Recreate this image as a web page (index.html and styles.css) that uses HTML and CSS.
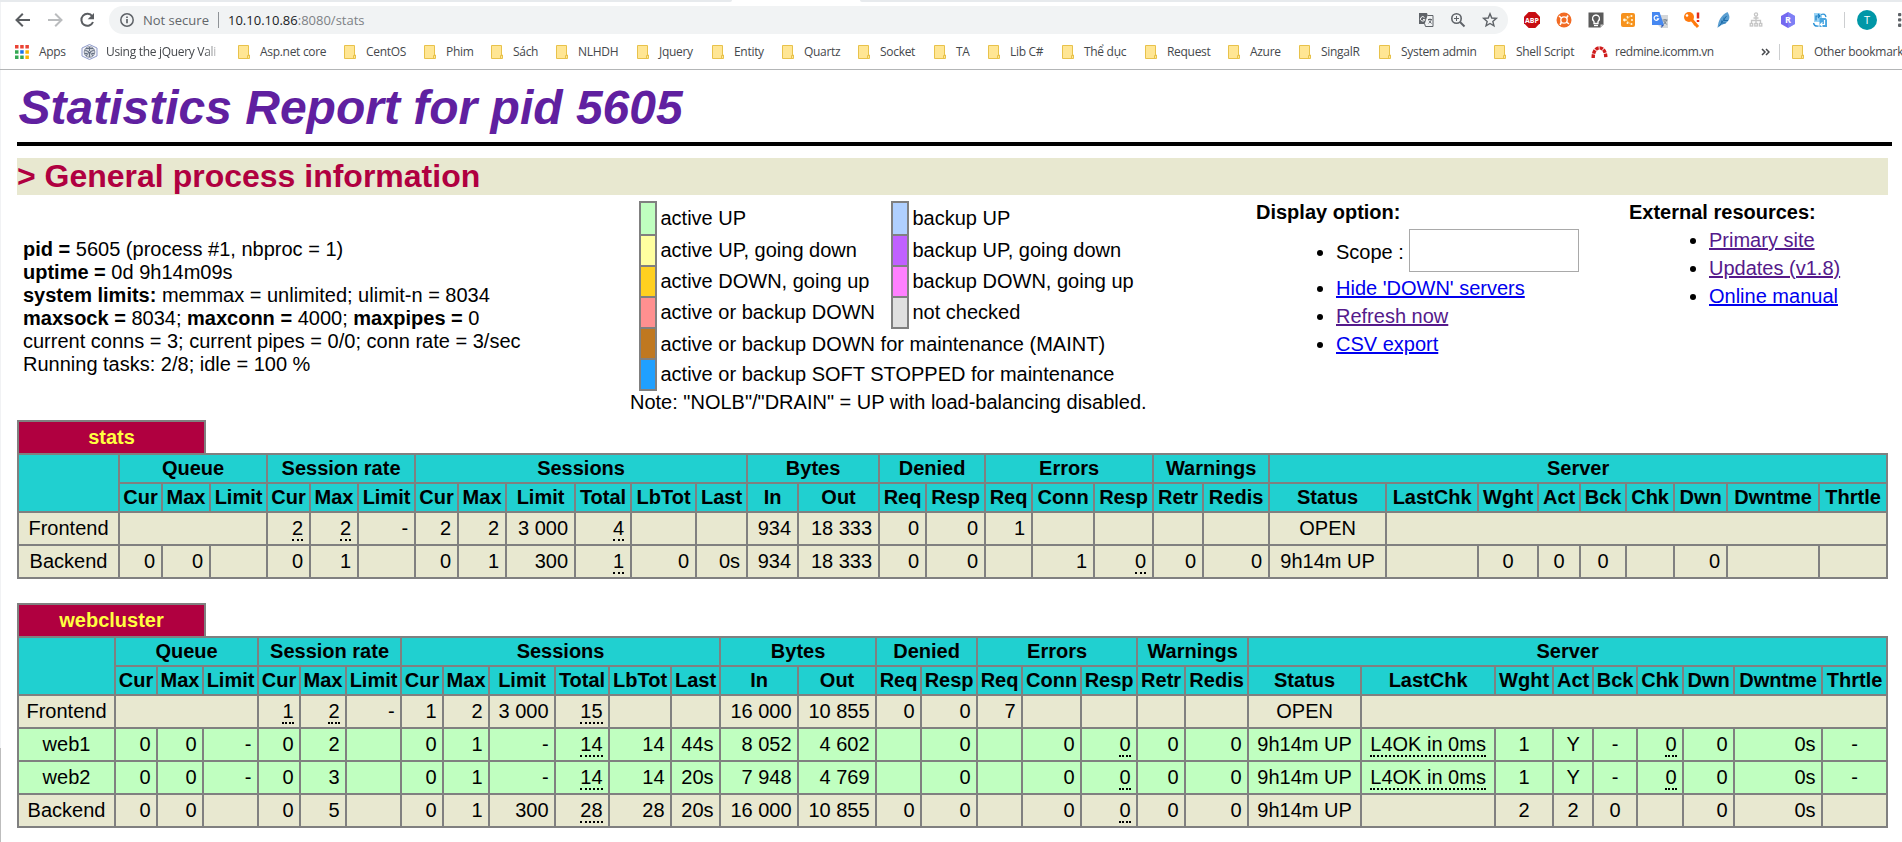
FILE: index.html
```html
<!DOCTYPE html>
<html lang="en">
<head>
<meta charset="utf-8">
<title>Statistics Report for HAProxy</title>
<link rel="stylesheet" href="styles.css">
</head>
<body>
<svg class="defs" width="0" height="0">
  <symbol id="folder" viewBox="0 0 12 14"><path d="M.5 .5h10v9.5h1v3.5h-11z" fill="#ffe694" stroke="#e8c24b"/><path d="M9.5 13.500v-3h1.500" fill="none" stroke="#e8c24b"/></symbol>
</svg>

<header class="browser">
  <div class="tabstrip"><i class="tabs-left"></i><i class="tabs-right"></i></div>
  <div class="toolbar">
    <div class="nav">
      <svg width="32" height="28" viewBox="0 0 32 28"><path d="M23 14H10M15.800 7.700L9.500 14l6.300 6.300" fill="none" stroke="#5a5d61" stroke-width="2"/></svg>
      <svg width="32" height="28" viewBox="0 0 32 28"><path d="M9 14h13M16.200 7.700l6.300 6.300-6.300 6.300" fill="none" stroke="#babcbe" stroke-width="2"/></svg>
      <svg width="32" height="28" viewBox="0 0 32 28"><path d="M21.300 10.300A6 6 0 1 0 22 16" fill="none" stroke="#5a5d61" stroke-width="2"/><path d="M23 7v6.300h-6.300z" fill="#5a5d61"/></svg>
    </div>
    <div class="omnibox">
      <svg width="16" height="16" viewBox="0 0 16 16"><circle cx="8" cy="8" r="6.200" fill="none" stroke="#5f6368" stroke-width="1.500"/><path d="M8 7v4.200M8 4.500v1.600" stroke="#5f6368" stroke-width="1.700"/></svg>
      <span class="notsecure">Not secure</span>
      <span class="urlsep"></span>
      <span class="url">10.10.10.86<span class="path">:8080/stats</span></span>
      <span class="omni-icons">
        <svg width="32" height="16" viewBox="0 0 32 16"><path d="M9 1h8l3.500 11H9z" fill="#5f6368"/><path d="M17.500 3.500H23v11h-7.500l-.8-2.500" fill="#f1f3f4" stroke="#5f6368"/><path d="M14.500 5.600a2.200 2.200 0 1 0 .3 2H13" fill="none" stroke="#fff"/><path d="M18 7.500h4M20 6.500v1M21.300 7.500c-.4 1.800-1.600 3-2.700 3.800M18.800 8.500l2.700 3" fill="none" stroke="#5f6368"/></svg>
        <svg width="32" height="16" viewBox="0 0 32 16"><circle cx="14.500" cy="6.500" r="4.700" fill="none" stroke="#5f6368" stroke-width="1.600"/><path d="M18 10l4.500 4.500" stroke="#5f6368" stroke-width="2"/><path d="M12 6.500h5M14.500 4v5" stroke="#5f6368"/></svg>
        <svg width="32" height="16" viewBox="0 0 32 16"><path d="M16 1.800l1.750 4.250 4.600.35-3.500 3 1.100 4.450L16 11.450l-3.950 2.400 1.100-4.450-3.500-3 4.600-.35z" fill="none" stroke="#5f6368" stroke-width="1.400"/></svg>
      </span>
    </div>
    <div class="extensions">
      <svg width="32" height="18" viewBox="0 0 32 18"><path d="M12.700 1h6.600L24 5.700v6.600L19.300 17h-6.600L8 12.300V5.700z" fill="#c70d12"/><text x="16" y="12" class="abp">ABP</text></svg>
      <svg width="32" height="18" viewBox="0 0 32 18"><circle cx="16" cy="9" r="7.500" fill="#f26b24"/><circle cx="16" cy="9" r="3.200" fill="none" stroke="#fff" stroke-width="1.300"/><path d="M11 5l2.500 2M18.500 7L20 4.500M18.500 11l2.500 2M13.500 11L12 13.800" stroke="#fff" stroke-width="1.600"/></svg>
      <svg width="32" height="18" viewBox="0 0 32 18"><path d="M8.500 1.500h15v12l-3 3h-12z" fill="#5b5b5b"/><path d="M23.500 13.500h-3v3z" fill="#ccc"/><path d="M14 10.500c-3-3-1-6.500 2-6.500s5 3.500 2 6.500v2h-4z" fill="none" stroke="#fff" stroke-width="1.300"/><path d="M14 14.500h4" stroke="#fff" stroke-width="1.300"/></svg>
      <svg width="32" height="18" viewBox="0 0 32 18"><rect x="9" y="2" width="14" height="14" rx="2" fill="#f6921e"/><path d="M18.500 5L14 9l4.500 4" fill="none" stroke="#ffd27a" stroke-width="1"/><g fill="#fff8df"><circle cx="12.500" cy="9" r="1.400"/><circle cx="15.500" cy="6" r="1"/><circle cx="19.500" cy="5" r="1"/><circle cx="20" cy="9" r="1"/><circle cx="19.500" cy="13" r="1"/><circle cx="15.500" cy="12" r="1"/></g></svg>
      <svg width="32" height="18" viewBox="0 0 32 18"><path d="M16 4h8v13h-7l-3-3z" fill="#d4d7da"/><path d="M8 1h7.500l4.500 13H8z" fill="#4688f1"/><path d="M17.500 14H20l-2.700 3z" fill="#3059b5"/><path d="M14.300 5.600a2.300 2.300 0 1 0 .3 2.200h-1.800" fill="none" stroke="#fff" stroke-width="1.200"/><path d="M18.500 9h5M21 8v1M22.500 9c-.5 2-1.600 3.300-3 4.200M19.700 10l3 3.500" fill="none" stroke="#707d88"/></svg>
      <svg width="32" height="18" viewBox="0 0 32 18"><circle cx="13" cy="6" r="5" fill="#ff7a0d"/><path d="M15 8l7 8" stroke="#ff7a0d" stroke-width="3"/><circle cx="11" cy="4.500" r="1.300" fill="#fff"/><path d="M18 14l2-1.500" stroke="#ff7a0d" stroke-width="2"/><path d="M22 1.500v6" stroke="#e22a18" stroke-width="2.500"/><path d="M22 9v2" stroke="#e22a18" stroke-width="2.500"/></svg>
      <svg width="32" height="18" viewBox="0 0 32 18"><path d="M19.500 1c3 4.500 2.500 8-1.500 11l-6.500 3-2 2C10.500 9 13 4.500 19.500 1z" fill="#5b9fd2"/><path d="M18.500 5L11 15.500M13.700 9.500V12h4M16 6.500v3h4" fill="none" stroke="#1d6ca9"/></svg>
      <svg width="32" height="18" viewBox="0 0 32 18"><g fill="none" stroke="#c5c5c5" stroke-width="1.300"><circle cx="16" cy="3.500" r="1.600"/><path d="M16 5v8M11.500 12V9.500h9V12M13.500 7h5"/><rect x="10.200" y="12.500" width="2.500" height="2.500"/><rect x="14.800" y="12.500" width="2.500" height="2.500"/><rect x="19.300" y="12.500" width="2.500" height="2.500"/></g></svg>
      <svg width="32" height="18" viewBox="0 0 32 18"><path d="M16 1l7 4v8l-7 4-7-4V5z" fill="#7468f0"/><path d="M16 1l7 4v8l-7 4z" fill="#8590f8" opacity=".6"/><text x="16" y="12.300" class="rletter">R</text></svg>
      <svg width="32" height="18" viewBox="0 0 32 18"><path d="M10 2h6l2 2v7h-8z" fill="#9bd4f5"/><path d="M15.500 7h6l1.500 1.500V16h-7.500z" fill="#4aa6e0"/><path d="M12 9.500V5h3.500m-1.500-2l2 2-2 2" fill="none" stroke="#1b7fc4" stroke-width="1.200"/><path d="M20.500 9v4.500H17m1.500-2l-2 2 2 2" fill="none" stroke="#fff" stroke-width="1.200"/><path d="M17 3.500c3-1 4.500 0 5 2.500M9.500 12c.5 2.500 2 3.500 5 3" fill="none" stroke="#2d93d6" stroke-width="1.300"/></svg>
      <span class="extsep"></span>
      <span class="avatar">T</span>
      <svg class="menu" width="5" height="16" viewBox="0 0 5 16"><g fill="#5f6368"><rect x="1" y="1" width="3.300" height="3.300" rx="1"/><rect x="1" y="6.300" width="3.300" height="3.300" rx="1"/><rect x="1" y="11.600" width="3.300" height="3.300" rx="1"/></g></svg>
    </div>
  </div>
  <nav class="bookmarks">
    <span class="bm apps"><svg width="14" height="14" viewBox="0 0 14 14"><g fill="#ea4335"><path d="M0 0h3.500v3.500H0zM5.200 0h3.500v3.500H5.200zM10.400 0h3.500v3.500h-3.500z"/></g><g fill="#34a853"><path d="M0 5.200h3.500v3.500H0zM0 10.400h3.500v3.500H0zM5.200 10.400h3.500v3.500H5.200z"/></g><path d="M5.200 5.200h3.500v3.500H5.200z" fill="#1a73e8"/><path d="M10.400 5.200h3.500v3.500h-3.500zM10.400 10.400h3.500v3.500h-3.500z" fill="#fbb400"/></svg>Apps</span>
    <span class="bm jq"><svg width="17" height="16" viewBox="0 0 17 16"><path d="M8.500 .5L16 4v8l-7.500 3.500L1 12V4z" fill="#f4f5fa" stroke="#8f9bcb" /><circle cx="8.500" cy="8" r="5.300" fill="#cfd3da" stroke="#858d9b"/><path d="M8.500 3v4M4 6l4 2-3 4M13 6L9 8l3 4M8.500 8l0 5M5 4.500l7 0M3.700 9.500h2.500M11 9.500h2" fill="none" stroke="#657083"/></svg><span class="fade">Using the jQuery Vali</span></span>
    <span class="bm"><svg width="12" height="14"><use href="#folder"/></svg>Asp.net core</span>
    <span class="bm"><svg width="12" height="14"><use href="#folder"/></svg>CentOS</span>
    <span class="bm"><svg width="12" height="14"><use href="#folder"/></svg>Phim</span>
    <span class="bm"><svg width="12" height="14"><use href="#folder"/></svg>Sách</span>
    <span class="bm"><svg width="12" height="14"><use href="#folder"/></svg>NLHDH</span>
    <span class="bm"><svg width="12" height="14"><use href="#folder"/></svg>Jquery</span>
    <span class="bm"><svg width="12" height="14"><use href="#folder"/></svg>Entity</span>
    <span class="bm"><svg width="12" height="14"><use href="#folder"/></svg>Quartz</span>
    <span class="bm"><svg width="12" height="14"><use href="#folder"/></svg>Socket</span>
    <span class="bm"><svg width="12" height="14"><use href="#folder"/></svg>TA</span>
    <span class="bm"><svg width="12" height="14"><use href="#folder"/></svg>Lib C#</span>
    <span class="bm"><svg width="12" height="14"><use href="#folder"/></svg>Thể dục</span>
    <span class="bm"><svg width="12" height="14"><use href="#folder"/></svg>Request</span>
    <span class="bm"><svg width="12" height="14"><use href="#folder"/></svg>Azure</span>
    <span class="bm"><svg width="12" height="14"><use href="#folder"/></svg>SingalR</span>
    <span class="bm"><svg width="12" height="14"><use href="#folder"/></svg>System admin</span>
    <span class="bm"><svg width="12" height="14"><use href="#folder"/></svg>Shell Script</span>
    <span class="bm red"><svg width="17" height="12" viewBox="0 0 17 12"><path d="M2.200 12C1.800 -1.500 15.200 -1.500 14.800 12" fill="none" stroke="#cf1b1b" stroke-width="3.400" stroke-dasharray="3.600 .8"/></svg>redmine.icomm.vn</span>
    <svg class="more" width="9" height="8" viewBox="0 0 9 8"><path d="M1 1l3 3-3 3M5 1l3 3-3 3" fill="none" stroke="#45484c" stroke-width="1.500"/></svg>
    <span class="bmsep"></span>
    <span class="bm other"><svg width="12" height="14"><use href="#folder"/></svg>Other bookmark</span>
  </nav>
</header>

<main class="page">
  <h1>Statistics Report for pid 5605</h1>
  <hr>
  <h2>&gt; General process information</h2>

  <section class="info">
    <p class="process">
      <b>pid = </b>5605 (process #1, nbproc = 1)<br>
      <b>uptime = </b>0d 9h14m09s<br>
      <b>system limits:</b> memmax = unlimited; ulimit-n = 8034<br>
      <b>maxsock = </b>8034; <b>maxconn = </b>4000; <b>maxpipes = </b>0<br>
      current conns = 3; current pipes = 0/0; conn rate = 3/sec<br>
      Running tasks: 2/8; idle = 100 %
    </p>
    <div class="legend">
      <table class="lgd">
        <tr><td class="sw active3"></td><td>active UP</td><td class="sw backup3"></td><td>backup UP</td></tr>
        <tr><td class="sw active2"></td><td>active UP, going down</td><td class="sw backup2"></td><td>backup UP, going down</td></tr>
        <tr><td class="sw active1"></td><td>active DOWN, going up</td><td class="sw backup1"></td><td>backup DOWN, going up</td></tr>
        <tr><td class="sw active0"></td><td>active or backup DOWN</td><td class="sw nocheck"></td><td>not checked</td></tr>
        <tr><td class="sw maint"></td><td colspan="3">active or backup DOWN for maintenance (MAINT)</td></tr>
        <tr><td class="sw stopped"></td><td colspan="3">active or backup SOFT STOPPED for maintenance</td></tr>
      </table>
      <div class="note">Note: "NOLB"/"DRAIN" = UP with load-balancing disabled.</div>
    </div>
    <div class="options">
      <b>Display option:</b>
      <ul>
        <li class="scope">Scope : <input type="text"></li>
        <li><a href="#">Hide 'DOWN' servers</a></li>
        <li><a href="#" class="seen">Refresh now</a></li>
        <li><a href="#">CSV export</a></li>
      </ul>
    </div>
    <div class="external">
      <b>External resources:</b>
      <ul>
        <li><a href="#" class="seen">Primary site</a></li>
        <li><a href="#" class="seen">Updates (v1.8)</a></li>
        <li><a href="#">Online manual</a></li>
      </ul>
    </div>
  </section>

  <div class="pxname">stats</div>
  <table class="tbl stats">
    <colgroup><col><col><col><col><col><col><col><col><col><col><col><col><col><col><col><col><col><col><col><col><col><col><col><col><col><col><col><col><col><col><col></colgroup>
    <tr><th rowspan="2"></th><th colspan="3">Queue</th><th colspan="3">Session rate</th><th colspan="6">Sessions</th><th colspan="2">Bytes</th><th colspan="2">Denied</th><th colspan="3">Errors</th><th colspan="2">Warnings</th><th colspan="9">Server</th></tr>
    <tr><th>Cur</th><th>Max</th><th>Limit</th><th>Cur</th><th>Max</th><th>Limit</th><th>Cur</th><th>Max</th><th>Limit</th><th>Total</th><th>LbTot</th><th>Last</th><th>In</th><th>Out</th><th>Req</th><th>Resp</th><th>Req</th><th>Conn</th><th>Resp</th><th>Retr</th><th>Redis</th><th>Status</th><th>LastChk</th><th>Wght</th><th>Act</th><th>Bck</th><th>Chk</th><th>Dwn</th><th>Dwntme</th><th>Thrtle</th></tr>
    <tr><td class="ac">Frontend</td><td colspan="3"></td><td><u>2</u></td><td><u>2</u></td><td>-</td><td>2</td><td>2</td><td>3 000</td><td><u>4</u></td><td></td><td></td><td>934</td><td>18 333</td><td>0</td><td>0</td><td>1</td><td></td><td></td><td></td><td></td><td class="ac">OPEN</td><td colspan="8"></td></tr>
    <tr><td class="ac">Backend</td><td>0</td><td>0</td><td></td><td>0</td><td>1</td><td></td><td>0</td><td>1</td><td>300</td><td><u>1</u></td><td>0</td><td>0s</td><td>934</td><td>18 333</td><td>0</td><td>0</td><td></td><td>1</td><td><u>0</u></td><td>0</td><td>0</td><td class="ac">9h14m UP</td><td></td><td class="ac">0</td><td class="ac">0</td><td class="ac">0</td><td></td><td>0</td><td></td><td></td></tr>
  </table>

  <div class="pxname second">webcluster</div>
  <table class="tbl webcluster">
    <colgroup><col><col><col><col><col><col><col><col><col><col><col><col><col><col><col><col><col><col><col><col><col><col><col><col><col><col><col><col><col><col><col></colgroup>
    <tr><th rowspan="2"></th><th colspan="3">Queue</th><th colspan="3">Session rate</th><th colspan="6">Sessions</th><th colspan="2">Bytes</th><th colspan="2">Denied</th><th colspan="3">Errors</th><th colspan="2">Warnings</th><th colspan="9">Server</th></tr>
    <tr><th>Cur</th><th>Max</th><th>Limit</th><th>Cur</th><th>Max</th><th>Limit</th><th>Cur</th><th>Max</th><th>Limit</th><th>Total</th><th>LbTot</th><th>Last</th><th>In</th><th>Out</th><th>Req</th><th>Resp</th><th>Req</th><th>Conn</th><th>Resp</th><th>Retr</th><th>Redis</th><th>Status</th><th>LastChk</th><th>Wght</th><th>Act</th><th>Bck</th><th>Chk</th><th>Dwn</th><th>Dwntme</th><th>Thrtle</th></tr>
    <tr><td class="ac">Frontend</td><td colspan="3"></td><td><u>1</u></td><td><u>2</u></td><td>-</td><td>1</td><td>2</td><td>3 000</td><td><u>15</u></td><td></td><td></td><td>16 000</td><td>10 855</td><td>0</td><td>0</td><td>7</td><td></td><td></td><td></td><td></td><td class="ac">OPEN</td><td colspan="8"></td></tr>
    <tr class="up"><td class="ac">web1</td><td>0</td><td>0</td><td>-</td><td>0</td><td>2</td><td></td><td>0</td><td>1</td><td>-</td><td><u>14</u></td><td>14</td><td>44s</td><td>8 052</td><td>4 602</td><td></td><td>0</td><td></td><td>0</td><td><u>0</u></td><td>0</td><td>0</td><td class="ac">9h14m UP</td><td class="ac"><u>L4OK in 0ms</u></td><td class="ac">1</td><td class="ac">Y</td><td class="ac">-</td><td><u>0</u></td><td>0</td><td>0s</td><td class="ac">-</td></tr>
    <tr class="up"><td class="ac">web2</td><td>0</td><td>0</td><td>-</td><td>0</td><td>3</td><td></td><td>0</td><td>1</td><td>-</td><td><u>14</u></td><td>14</td><td>20s</td><td>7 948</td><td>4 769</td><td></td><td>0</td><td></td><td>0</td><td><u>0</u></td><td>0</td><td>0</td><td class="ac">9h14m UP</td><td class="ac"><u>L4OK in 0ms</u></td><td class="ac">1</td><td class="ac">Y</td><td class="ac">-</td><td><u>0</u></td><td>0</td><td>0s</td><td class="ac">-</td></tr>
    <tr><td class="ac">Backend</td><td>0</td><td>0</td><td></td><td>0</td><td>5</td><td></td><td>0</td><td>1</td><td>300</td><td><u>28</u></td><td>28</td><td>20s</td><td>16 000</td><td>10 855</td><td>0</td><td>0</td><td></td><td>0</td><td><u>0</u></td><td>0</td><td>0</td><td class="ac">9h14m UP</td><td></td><td class="ac">2</td><td class="ac">2</td><td class="ac">0</td><td></td><td>0</td><td>0s</td><td></td></tr>
  </table>
</main>
</body>
</html>
```
FILE: styles.css
```css
* { box-sizing: border-box; }
html { overflow: hidden; }
body {
  margin: 0;
  width: 1902px;
  height: 842px;
  overflow: hidden;
  background: #fff linear-gradient(#f1f2f4 748px, #bdbdbd 748px) 0 0 / 1px 100% no-repeat;
  color: #000;
  font: 20px/23px "Liberation Sans", Arial, sans-serif;
}
.defs { display: block; }

/* browser frame */
.browser {
  display: flex;
  flex-direction: column;
  height: 70px;
  border-bottom: 1px solid #b3b5b6;
  font-family: "Open Sans", "Noto Sans", sans-serif;
  font-size: 12px;
  color: #45484c;
  overflow: hidden;
}
.tabstrip { display: flex; justify-content: space-between; height: 2px; }
.tabstrip i { background: #e7eaed; }
.tabs-left { width: 732px; border-bottom-right-radius: 3px; }
.tabs-right { width: 1042px; border-bottom-left-radius: 3px; }
.toolbar { display: flex; align-items: center; height: 36px; }
.nav { display: flex; width: 109px; padding-left: 7px; }
.nav svg { flex: none; }
.omnibox {
  display: flex;
  align-items: center;
  width: 1399px;
  height: 28px;
  padding-left: 10px;
  border-radius: 14px;
  background: #f1f3f4;
}
.notsecure { width: 68px; margin-left: 8px; color: #63676b; font-size: 13px; white-space: nowrap; line-height: 20px; }
.urlsep { width: 1px; height: 16px; margin: 0 9px 0 7px; background: #8f9397; }
.url { color: #202124; font-size: 13px; white-space: nowrap; line-height: 20px; }
.path { color: #7d8185; }
.omni-icons { display: flex; margin-left: auto; padding-right: 2px; }
.extensions { display: flex; align-items: center; flex: 1; padding-left: 8px; }
.extensions svg { flex: none; }
.abp { font: bold 7px "Open Sans", sans-serif; fill: #fff; text-anchor: middle; }
.rletter { font: bold 9px "Open Sans", sans-serif; fill: #fff; text-anchor: middle; }
.extsep { width: 1px; height: 16px; margin-left: 8px; background: #ccced0; }
.avatar {
  width: 20px; height: 20px; margin-left: 12px; border-radius: 50%;
  background: #0097a7; color: #fff; text-align: center; line-height: 20px; font-size: 11px;
}
.menu { margin-left: 20px; }
.bookmarks {
  display: grid;
  grid-template-columns: 66px 157px 106px 80px 67px 65px 81px 75px 70px 76px 76px 54px 74px 83px 83px 71px 80px 115px 97px 170px 18px 13px 110px;
  align-items: center;
  height: 28px;
  padding-left: 15px;
  letter-spacing: -.3px;
}
.bm { display: flex; align-items: center; gap: 10px; white-space: nowrap; line-height: 18px; }
.bm svg { flex: none; }
.jq { gap: 8px; }
.red { gap: 7px; letter-spacing: -.4px; }
.other { letter-spacing: -.25px; }
.fade {
  width: 116px;
  -webkit-mask-image: linear-gradient(90deg, #000 85%, transparent);
  mask-image: linear-gradient(90deg, #000 85%, transparent);
}
.bmsep { width: 1px; height: 16px; background: #ccced0; }

/* report */
.page { padding: 10px 10px 0 17px; }
h1 {
  margin: 0;
  padding-left: 1.500px;
  height: 62px;
  font: italic bold 48px/55px "Liberation Sans", Arial, sans-serif;
  color: #6020a0;
}
hr { height: 4px; margin: 0 0 12px; border: 0; background: #000; }
h2 {
  margin: 0;
  width: 1871px;
  height: 37px;
  font: bold 32px/37px "Liberation Sans", Arial, sans-serif;
  color: #b00040;
  background: #e8e8d0;
}
.info { display: grid; grid-template-columns: 613px 626px 373px 259px; height: 225px; white-space: nowrap; }
.process { margin: 0; padding: 43px 0 0 6px; }
.legend { padding-top: 6px; }
.lgd { border-collapse: collapse; margin-left: 9px; table-layout: fixed; width: 558px; }
.lgd td { height: 31px; padding: 0 0 0 3.500px; }
.lgd tr:first-child td { height: 33px; }
.lgd td:nth-child(2) { width: 236px; }
.lgd .sw { width: 16px; padding: 0; border: 2px solid #808080; }
.active3 { background: #c0ffc0; }
.active2 { background: #ffffa0; }
.active1 { background: #ffd020; }
.active0 { background: #ff9090; }
.maint { background: #c07820; }
.stopped { background: #20a0ff; }
.backup3 { background: #b0d0ff; }
.backup2 { background: #c060ff; }
.backup1 { background: #ff80ff; }
.nocheck { background: #e0e0e0; }
.options, .external { padding-top: 6px; }
ul { margin: 0; padding: 0 0 0 80px; }
li { height: 28px; padding-top: 5px; }
.scope { height: 48px; }
.scope input { width: 170px; height: 43px; margin: 0 0 6px; padding: 0; border: 1px solid #a9a9a9; vertical-align: middle; }
a { color: #0000ee; text-decoration: underline; }
a.seen { color: #551a8b; }

.pxname {
  width: 189px;
  height: 33px;
  border: 2px solid #808080;
  border-bottom: 0;
  background: #b00040;
  color: #ffff40;
  font-weight: bold;
  line-height: 31px;
  text-align: center;
}
.second { margin-top: 24px; }
.tbl { width: 1871px; border-collapse: collapse; table-layout: fixed; white-space: nowrap; }
.tbl th, .tbl td { border: 2px solid #808080; }
.tbl th { height: 29px; padding: 0; background: #20d0d0; }
.tbl td { height: 33px; padding: 0 6px 0 0; background: #e8e8d0; text-align: right; }
.webcluster td { padding-right: 5.500px; }
.tbl .up td { background: #c0ffc0; }
.tbl .ac { padding: 0; text-align: center; }
.tbl u { text-decoration: none; border-bottom: 2px dotted #000; }

/* column widths: stats */
.stats col:nth-child(1) { width: 101px; }
.stats col:nth-child(2), .stats col:nth-child(5), .stats col:nth-child(8) { width: 43px; }
.stats col:nth-child(3), .stats col:nth-child(6), .stats col:nth-child(9) { width: 48px; }
.stats col:nth-child(4), .stats col:nth-child(7) { width: 57px; }
.stats col:nth-child(10) { width: 69px; }
.stats col:nth-child(11) { width: 56px; }
.stats col:nth-child(12) { width: 65px; }
.stats col:nth-child(13), .stats col:nth-child(14) { width: 51px; }
.stats col:nth-child(15) { width: 81px; }
.stats col:nth-child(16), .stats col:nth-child(18) { width: 47px; }
.stats col:nth-child(17), .stats col:nth-child(20) { width: 59px; }
.stats col:nth-child(19) { width: 62px; }
.stats col:nth-child(21) { width: 50px; }
.stats col:nth-child(22) { width: 66px; }
.stats col:nth-child(23) { width: 117px; }
.stats col:nth-child(24), .stats col:nth-child(30) { width: 92px; }
.stats col:nth-child(25) { width: 60px; }
.stats col:nth-child(26) { width: 42px; }
.stats col:nth-child(27) { width: 46px; }
.stats col:nth-child(28) { width: 48px; }
.stats col:nth-child(29) { width: 53px; }
.stats col:nth-child(31) { width: 68px; }

/* column widths: webcluster */
.webcluster col:nth-child(1) { width: 97px; }
.webcluster col:nth-child(2), .webcluster col:nth-child(5), .webcluster col:nth-child(8) { width: 42px; }
.webcluster col:nth-child(3), .webcluster col:nth-child(6), .webcluster col:nth-child(9) { width: 46px; }
.webcluster col:nth-child(4), .webcluster col:nth-child(7) { width: 55px; }
.webcluster col:nth-child(10) { width: 66px; }
.webcluster col:nth-child(11) { width: 54px; }
.webcluster col:nth-child(12) { width: 62px; }
.webcluster col:nth-child(13) { width: 49px; }
.webcluster col:nth-child(14), .webcluster col:nth-child(15) { width: 78px; }
.webcluster col:nth-child(16), .webcluster col:nth-child(18) { width: 45px; }
.webcluster col:nth-child(17), .webcluster col:nth-child(20) { width: 56px; }
.webcluster col:nth-child(19) { width: 59px; }
.webcluster col:nth-child(21) { width: 48px; }
.webcluster col:nth-child(22) { width: 63px; }
.webcluster col:nth-child(23) { width: 113px; }
.webcluster col:nth-child(24) { width: 134px; }
.webcluster col:nth-child(25) { width: 58px; }
.webcluster col:nth-child(26) { width: 40px; }
.webcluster col:nth-child(27) { width: 44px; }
.webcluster col:nth-child(28) { width: 46px; }
.webcluster col:nth-child(29) { width: 51px; }
.webcluster col:nth-child(30) { width: 88px; }
.webcluster col:nth-child(31) { width: 65px; }
```
